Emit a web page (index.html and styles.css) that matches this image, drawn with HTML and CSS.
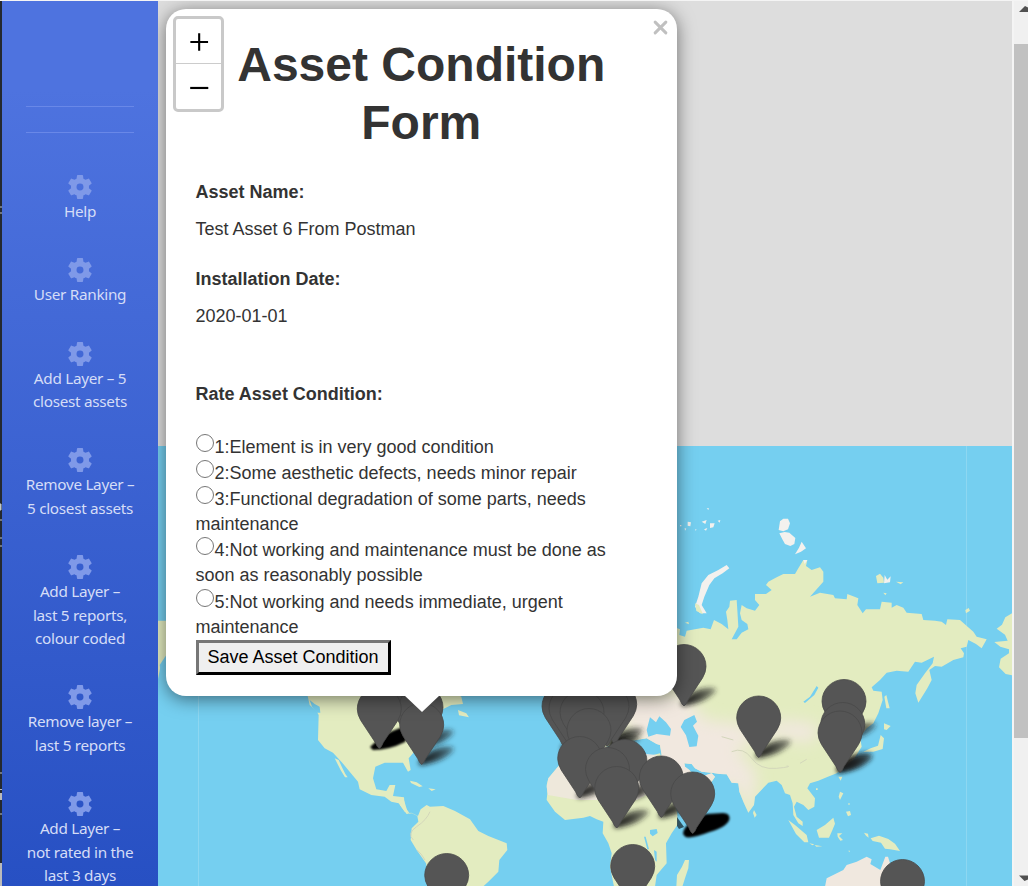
FILE: index.html
```
<!DOCTYPE html>
<html lang="en">
<head>
<meta charset="utf-8">
<title>Asset Condition Form</title>
<link rel="stylesheet" href="styles.css">
</head>
<body>
<svg class="defs" width="0" height="0" aria-hidden="true">
  <defs>
    <symbol id="cog" viewBox="2 2 20 20"><path d="M19.43 12.98c.04-.32.07-.64.07-.98s-.03-.66-.07-.98l2.11-1.65c.19-.15.24-.42.12-.64l-2-3.46c-.12-.22-.39-.3-.61-.22l-2.49 1c-.52-.4-1.08-.73-1.69-.98l-.38-2.65C14.46 2.18 14.25 2 14 2h-4c-.25 0-.46.18-.49.42l-.38 2.65c-.61.25-1.17.59-1.69.98l-2.49-1c-.23-.09-.49 0-.61.22l-2 3.46c-.13.22-.07.49.12.64l2.11 1.65c-.04.32-.07.65-.07.98s.03.66.07.98l-2.11 1.65c-.19.15-.24.42-.12.64l2 3.46c.12.22.39.3.61.22l2.49-1c.52.4 1.08.73 1.69.98l.38 2.65c.03.24.24.42.49.42h4c.25 0 .46-.18.49-.42l.38-2.65c.61-.25 1.17-.59 1.69-.98l2.49 1c.23.09.49 0 .61-.22l2-3.46c.12-.22.07-.49-.12-.64l-2.11-1.65zM12 14.900a2.900 2.900 0 1 1 0-5.800 2.900 2.900 0 0 1 0 5.800z"/></symbol>
    <filter id="soft" x="-50%" y="-80%" width="200%" height="260%"><feGaussianBlur stdDeviation="2.600"/></filter>
    <filter id="edgeblur" x="-20%" y="-20%" width="140%" height="140%"><feGaussianBlur stdDeviation=".8"/></filter>
    <filter id="haze" x="-30%" y="-30%" width="160%" height="160%"><feGaussianBlur stdDeviation="22"/></filter>
    <linearGradient id="fade" x1="0" x2="1" y1="0" y2="0"><stop offset="0" stop-color="#111"/><stop offset=".5" stop-color="#1a1a1a" stop-opacity=".8"/><stop offset="1" stop-color="#222" stop-opacity=".45"/></linearGradient>
    <g id="shade"><path d="M-3 0C-1-9 10-15 22-17C30-18 34-17 31-13C26-6 12-1 0 1z" fill="url(#fade)" filter="url(#soft)"/></g>
    <g id="pin"><path d="M0 0Q-2-1-4-6L-18.500-28Q-22-34-22-39.500A22 22 0 0 1 22-39.500Q22-34 18.500-28L4-6Q2-1 0 0z" fill="#555" stroke="#494949" stroke-width=".8"/></g>
  </defs>
</svg>
<div class="page">
  <svg class="edge" viewBox="0 0 2 885" aria-hidden="true"><path d="M0 206h2M0 212h2M0 503h1v6H0zM0 519h2M0 537h2M0 545h2M0 772h2M0 794h2M0 813h2" stroke="#bfc7c9" fill="#bfc7c9"/><path d="M0 788h2v1H0zM0 792h2v7H0zM0 862h2v23H0z" fill="#bbb"/></svg>
  <nav class="sidebar">
    <hr class="rule"><hr class="rule">
    <ul class="menu">
      <li class="item"><svg class="cog"><use href="#cog"/></svg><span>Help</span></li>
      <li class="item"><svg class="cog"><use href="#cog"/></svg><span>User Ranking</span></li>
      <li class="item"><svg class="cog"><use href="#cog"/></svg><span>Add Layer – 5</span><span>closest assets</span></li>
      <li class="item"><svg class="cog"><use href="#cog"/></svg><span>Remove Layer –</span><span>5 closest assets</span></li>
      <li class="item"><svg class="cog"><use href="#cog"/></svg><span>Add Layer –</span><span>last 5 reports,</span><span>colour coded</span></li>
      <li class="item"><svg class="cog"><use href="#cog"/></svg><span>Remove layer –</span><span>last 5 reports</span></li>
      <li class="item"><svg class="cog"><use href="#cog"/></svg><span>Add Layer –</span><span>not rated in the</span><span>last 3 days</span></li>
    </ul>
  </nav>
  <main class="map">
    <svg class="world" viewBox="158 1 854 885" aria-hidden="true">
      <defs>
        <clipPath id="asia"><path id="asiaLand" d="M-140 600L-140 930 -40 905 20 895 50 912 60 915 65 945 40 965 40 1050 60 1100 100 1090 175 1070 205 1040 225 1010 215 1000 190 1008 160 1005 148 990 135 980 133 970 155 972 165 985 185 995 215 998 240 1002 260 1003 275 1028 295 1030 298 1055 310 1085 325 1118 342 1095 345 1070 385 1028 410 1022 425 1035 435 1060 450 1065 458 1090 460 1125 475 1150 488 1158 488 1145 470 1130 462 1100 470 1085 490 1095 505 1110 523 1100 525 1075 502 1045 510 1030 535 1022 560 1012 590 1000 610 985 640 960 665 920 660 890 680 865 700 850 715 820 728 780 725 755 700 752 695 742 720 720 740 698 770 692 805 695 825 665 845 668 862 660 882 650 878 670 855 700 830 735 826 760 835 788 862 745 875 720 868 690 885 678 905 680 940 660 970 652 972 640 962 625 980 620 985 600 1008 612 1025 625 1040 598 1010 590 1000 575 960 540 922 538 918 555 905 545 885 542 850 540 845 522 800 518 790 503 770 495 755 503 755 488 725 485 720 508 678 508 668 520 652 495 655 475 622 462 620 478 585 475 580 465 540 458 510 470 550 425 550 395 540 382 515 390 498 378 502 360 490 360 475 385 465 402 430 402 410 412 385 425 378 435 395 450 378 462 345 462 345 480 358 495 345 512 320 505 305 495 300 520 305 540 322 552 325 568 305 578 290 598 275 598 295 560 292 510 290 480 270 482 268 500 258 515 262 540 265 568 245 552 222 540 212 568 190 563 140 572 135 590 118 585 120 568 100 560z"/></clipPath>
      </defs>
      <path class="sea" d="M158 446h854v440H158z"/>
      <path class="seam" d="M198.500 446v440M966.500 446v440"/>
      <g transform="translate(640 440) scale(.33333)">
        <use href="#asiaLand" class="land"/>
        <g clip-path="url(#asia)">
          <path class="sand" filter="url(#haze)" d="M-140 740L40 760 130 760 200 840 290 850 340 870 430 840 520 850 540 880 500 910 420 890 340 900 290 930 350 1000 335 1130 290 1040 130 1040 0 980 0 900z"/>
          <path class="ridge" d="M275 935Q310 920 335 955T410 985T440 978M245 890L280 900M480 970l20-12"/>
          <path class="sea" d="M133 840l30-15 8 20-12 12 16 30-5 32-22 2-10-35-16-25zM20 870l10-38 18 15 10-18 20 18 15 20-3 20-40-5-25 8zM490 785l20-15 20-32 5 5-12 22-28 24z"/>
        </g>
        <path class="snow" d="M180 520l-15-20 10-30 10-40 20-25 30-15 25-15 8 10-20 15-25 15-15 20-15 35-8 25 15 25z"/>
        <path class="land" d="M165 490l12 5 12 28-20-10zM708 408l12-7 10 12 2 15-20 2zM768 425l22 2-8 6zM730 458l10 2-4 6zM976 510l10-6 4 8-12 8zM135 548l10-3 2 8z"/>
        <path class="snow" d="M734 405l8 14 10-10-2 18-18 3zM420 244l10-8 14 0 6 14-6 18-14 6-14-4zM418 280l16-4 14 2 18 16-3 18-12 6-16-6-8-14zM485 305l13 20-15 10-18 8 12-20zM490 360l12 0-8 12zM120 255h4v4h-4zM143 245l10 2-2 12-8-2zM185 245l15-5-4 12zM210 250l14 0-4 12-10 2zM233 242l8-2-2 8zM192 268l10-4-4 8zM200 205l7 0-2 5zM134 264l5 2-4 6zM166 267l4 2-4 3z"/>
        <path class="land" d="M1116 520l-20 12-10 22-16 12 25 18 8 18-40 4 18 14 26 8v12l-25 16-5 26 20 20 19 4zM733 770l6-5 5 20 5 20-10 0zM732 850l20 8-12 12-8-2zM722 885l10 10-4 32-28 8-30 0 22-10 22-8zM595 1010h12l-5 12zM600 1055l10 5-10 20-4-10zM528 1045h5v5h-5zM618 1115l12-2 3 12-9 4zM625 1090h4v4h-4zM342 1110l8 15-6 8-5-14zM445 1140l20 15 35 30 5 22-12 0-25-25zM508 1210l15 3-6 3zM524 1215l23 4-18 1zM530 1170l25-15 25-22 5 18-8 20-10 22-30 0zM592 1180l15 0-10 8 12 12-8 2-8-12zM672 1178l12 3 2 12-8-6zM692 1195l25-8 28 10 20 14 15 22-30-5-15-2-12-18-25-5zM625 1232l5 0-2 5z"/>
        <path class="sandland" d="M555 1340l5-25 50-25 10-15 30-10 30-15 15 8-4 14 30 18 15-40 8 0 14 45 30 15 60 30z"/>
      </g>
      <g transform="translate(540 690) scale(.33333)">
        <path class="land" d="M50 235L25 265 20 285 22 310 20 330 45 365 75 390 130 383 150 378 170 388 190 395 188 430 205 460 215 490 210 530 222 590 345 590 350 555 380 520 378 460 395 430 412 405 412 370 360 190 320 200 200 170 100 180z"/>
        <path class="sandland" d="M50 235L25 265 20 290 24 315 110 330 290 330 345 300 360 250 350 195 300 190 200 170 100 180z" opacity=".85"/>
        <path class="land" d="M435 510l12 0-2 25-10 30-8 25-18 0 2-35 15-25z"/>
        <path class="sea" d="M330 420l20-3 3 12-15 10-8-8zM312 440l5 0 10 38-5 0zM342 480l8 5 0 30-5-5z"/>
      </g>
      <g transform="translate(158 690) scale(.33333)">
        <path class="land" d="M445 0L455 45 475 62 482 75 480 150 500 175 525 188 550 215 575 245 600 275 605 298 640 315 680 320 700 335 722 340 740 365 755 370 740 350 738 322 705 318 712 285 695 285 685 303 655 298 645 265 652 230 680 218 735 218 750 245 758 240 752 205 765 190 850 60 880 45 915 42 910 20 880 0zM900 60l25 10 8 12-30-6zM530 205l12 5 10 22 10 20 7 10-8 0-12-20zM0-208h24v120l-15 10-4 20-5 25z"/>
        <path class="sea" d="M455 30l15 12 15 8 2 18-10 0-15-18z"/>
        <path class="sea" d="M25-105L5-75 8-60 24-80z"/>
      </g>
      <g transform="translate(400 690) scale(.33333)">
        <path class="land" d="M0 320l12 10 12 40 10-2 20 10 8-20 18-13 10 5 40-2 35 15 45 25 25 35 30 15 55 22 2 20-24 30-3 35-30 30-15 14H90L78 520 50 480 32 450 35 415 55 395 52 378 35 370 20 372 0 345zM30 272l20 5 18 12-10 2-25-12zM85 295l22 3-12 5z"/>
        <path class="ridge" d="M90 365Q80 390 50 410T40 450M50 480Q65 490 75 510"/>
      </g>
      <g>
        <use href="#shade" x="421.500" y="747"/><use href="#shade" x="421.700" y="764"/>
        <use href="#shade" x="684" y="705"/><use href="#shade" x="758.700" y="757"/>
        <use href="#shade" x="844" y="740"/><use href="#shade" x="840" y="770"/><use href="#shade" x="840" y="772"/>
        <use href="#shade" x="661.700" y="817"/><use href="#shade" x="579.700" y="797"/><use href="#shade" x="616.700" y="827"/><use href="#shade" x="625" y="800"/>
        <use href="#shade" x="564" y="750"/><use href="#shade" x="611" y="745"/><use href="#shade" x="608" y="752"/>
        <path d="M370 747q14-14 30-19l10 3-5 11q-16 8-32 8z" filter="url(#edgeblur)"/>
        <path filter="url(#edgeblur)" d="M683 834q0-6 8-12l15-8 17-1q7 0 6.500 6-2 8-20 13-18 7-24 5z"/><path d="M677 817l7 10-5 2-2-3z" opacity=".6"/>
      </g>
      <g>
        <use href="#pin" x="412" y="742"/><use href="#pin" x="421" y="747"/><use href="#pin" x="379.300" y="748.500"/><use href="#pin" x="421.700" y="764.500"/>
        <use href="#pin" x="684" y="706"/><use href="#pin" x="758.700" y="757.500"/>
        <use href="#pin" x="844" y="741"/><use href="#pin" x="842.800" y="764"/><use href="#pin" x="840" y="772.500"/>
        <use href="#pin" x="564" y="746"/><use href="#pin" x="614.700" y="744"/><use href="#pin" x="607" y="746"/><use href="#pin" x="571" y="748"/><use href="#pin" x="582" y="752"/><use href="#pin" x="589" y="770"/>
        <use href="#pin" x="579.700" y="798"/><use href="#pin" x="625" y="801"/><use href="#pin" x="607.500" y="809"/><use href="#pin" x="616.700" y="828"/>
        <use href="#pin" x="661.300" y="817.500"/><use href="#pin" x="692.700" y="833.500"/>
        <use href="#pin" x="632.700" y="906"/><use href="#pin" x="446.700" y="915"/><use href="#pin" x="902.500" y="921"/>
      </g>
    </svg>
    <section class="popup">
      <h1 class="title">Asset Condition Form</h1>
      <dl class="facts">
        <dt>Asset Name:</dt><dd>Test Asset 6 From Postman</dd>
        <dt>Installation Date:</dt><dd>2020-01-01</dd>
      </dl>
      <form class="form">
        <p class="question">Rate Asset Condition:</p>
        <label class="option"><input type="radio" name="c" class="radio">1:Element is in very good condition</label>
        <label class="option"><input type="radio" name="c" class="radio">2:Some aesthetic defects, needs minor repair</label>
        <label class="option"><input type="radio" name="c" class="radio">3:Functional degradation of some parts, needs<br>maintenance</label>
        <label class="option"><input type="radio" name="c" class="radio">4:Not working and maintenance must be done as<br>soon as reasonably possible</label>
        <label class="option"><input type="radio" name="c" class="radio">5:Not working and needs immediate, urgent<br>maintenance</label>
        <button type="button" class="save">Save Asset Condition</button>
      </form>
      <svg class="close" viewBox="0 0 14 14"><path d="M2 2l10 10M12 2L2 12"/></svg>
      <svg class="tip" viewBox="0 0 36 17"><path d="M0 0h36L18 17z"/></svg>
    </section>
    <div class="zoom">
      <svg class="zbtn" viewBox="0 0 46 46"><path d="M14.500 24H33M23.700 14.800v18.500"/></svg>
      <svg class="zbtn" viewBox="0 0 46 46"><path d="M14.500 24.500H33"/></svg>
    </div>
  </main>
  <aside class="scroll"><svg class="arrow" viewBox="0 0 14 43"><path d="M5 11h9V6.500L11 5z"/></svg><div class="thumb"></div><svg class="arrow down" viewBox="0 0 14 23"><path d="M5 12.500h9v4L10.500 18z"/></svg></aside>
</div>
</body>
</html>
```
FILE: styles.css
```
* { box-sizing: border-box; }
body { margin: 0; overflow: hidden; background: #f4f4f4; font-family: "Liberation Sans", Arial, sans-serif; }
.defs { position: absolute; }
.page { display: flex; height: 885px; margin-top: 1px; overflow: hidden; }
.edge { width: 2px; height: 885px; background: #24292f; flex: none; }

.sidebar { width: 156px; flex: none; padding: 105px 24px 0; background: linear-gradient(180deg, #4e73df 10%, #2750c3 100%); }
.rule { height: 1px; margin: 0 0 25px; border: 0; background: #6988e8; }
.menu { list-style: none; margin: 0; padding: 17px 0 0; }
.item { display: flex; flex-direction: column; align-items: center; padding-bottom: 34.750px; font: 15.300px/23.500px "Noto Sans", "Open Sans", sans-serif; letter-spacing: -.3px; color: #d5ddf7; white-space: nowrap; }
.cog { width: 24px; height: 24px; margin-bottom: 1px; fill: #7f99e8; }

.map { position: relative; width: 854px; flex: none; background: #ddd; overflow: hidden; }
.world { display: block; width: 854px; height: 885px; }
.sea { fill: #75cff0; }
.land { fill: #e3ecc0; }
.sand { fill: #f1e8df; }
.sandland { fill: #f0e8df; }
.snow { fill: #f3f1ee; }
.ridge { fill: none; stroke: #d3d6bb; stroke-width: 3; }
.seam { stroke: #98daf0; stroke-width: .7; }

.popup { position: absolute; left: 8px; top: 8px; width: 511px; height: 687px; padding: 27px 30px 0 29.500px; border-radius: 20px; background: #fff; color: #333; box-shadow: 0 3px 18px rgba(0, 0, 0, .5); font-size: 18px; line-height: 25.200px; }
.title { margin: 0 0 28px; padding: 0 20px; font-size: 48px; line-height: 58px; text-align: center; }
.facts { margin: 0; }
.facts dt { font-weight: bold; margin-bottom: 12px; }
.facts dd { margin: 0 0 24.600px; }
.question { margin: 53px 0 26.300px; font-weight: bold; }
.option { display: block; }
.radio { appearance: none; width: 18px; height: 18px; margin: 0 1px 0 0; border: 1.500px solid #767676; border-radius: 50%; vertical-align: .850px; }
.save { display: block; height: 35px; width: 195px; padding: 0; border: 3px outset #767676; border-color: #767676 #212121 #212121 #767676; background: #efefef; color: #000; font: 18px "Liberation Sans", Arial, sans-serif; }
.close { position: absolute; right: 9px; top: 11px; width: 15px; height: 15px; stroke: #c0c0c0; stroke-width: 2.800; stroke-linecap: round; }
.tip { position: absolute; left: 238px; top: 686px; width: 36px; height: 17px; fill: #fff; }

.zoom { position: absolute; left: 15px; top: 15px; width: 51px; height: 96px; border: 3px solid #c9c9c9; border-radius: 5px; background: #fff; display: flex; flex-direction: column; }
.zbtn { width: 45px; height: 45px; stroke: #000; stroke-width: 2.200; }
.zbtn:first-child { border-bottom: 1px solid #ccc; }

.scroll { width: 14px; margin-left: 2px; flex: none; background: #f0f0f0; display: flex; flex-direction: column; }
.arrow { width: 14px; height: 43px; fill: #505050; }
.thumb { height: 694px; background: #c1c1c1; }
.down { margin-top: 125px; height: 23px; }
```
